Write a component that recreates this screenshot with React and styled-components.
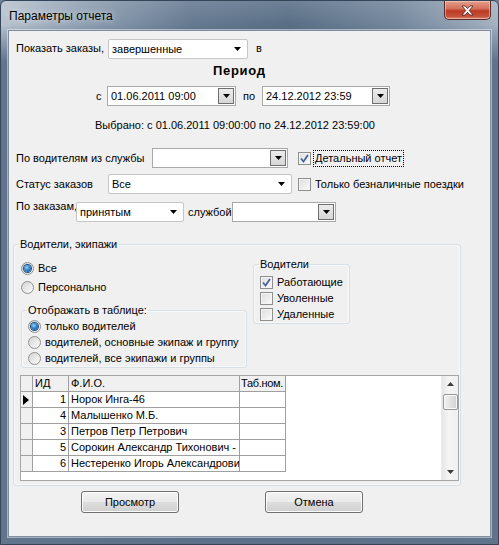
import React from 'react';
import styled, { createGlobalStyle } from 'styled-components';

const GlobalStyle = createGlobalStyle`
  html, body {
    margin: 0;
    padding: 0;
    background: #6b7f95;
  }
  body {
    font-family: 'Liberation Sans', Arial, sans-serif;
    font-size: 11px;
    color: #000;
  }
  * {
    box-sizing: border-box;
  }
`;

const Window = styled.div`
  width: 499px;
  height: 545px;
  display: flex;
  flex-direction: column;
  padding: 0 7px 7px 7px;
  border: 1px solid #34455a;
  border-radius: 6px 6px 0 0;
  background:
    linear-gradient(180deg, rgba(92, 113, 137, 0) 0px, rgba(92, 113, 137, 0) 24px, rgba(92, 113, 137, 0.95) 60px),
    linear-gradient(180deg, rgba(255, 255, 255, 0.15) 0px, rgba(255, 255, 255, 0) 30px),
    linear-gradient(90deg, #b6c1cd 0%, #8c9db0 16%, #60758d 38%, #546a82 58%, #6f8399 80%, #a2b0bf 100%);
`;

const TitleBar = styled.div`
  height: 29px;
  display: flex;
  justify-content: space-between;
  align-items: flex-start;
`;

const Title = styled.span`
  font-family: 'Liberation Sans', Arial, sans-serif;
  font-size: 12px;
  line-height: 12px;
  margin: 9px 0 0 1px;
  color: #000;
  text-shadow: 0 0 6px rgba(255, 255, 255, 0.9);
`;

const CloseButton = styled.div`
  width: 47px;
  height: 19px;
  display: flex;
  align-items: center;
  justify-content: center;
  border: 1px solid #5a2c2a;
  border-top: none;
  border-radius: 0 0 5px 5px;
  background: linear-gradient(180deg, #e3a08e 0%, #d4705b 42%, #bd3a24 55%, #c4503a 85%, #dc8c74 100%);
  box-shadow: inset 0 0 0 1px rgba(255, 220, 210, 0.5);
`;

const Client = styled.div`
  flex: 1;
  background: #f0f0f0;
  border: 1px solid #7f8ea1;
  box-shadow: 0 0 0 1px rgba(255, 255, 255, 0.45);
  padding: 7px 0 0 7px;
  display: flex;
  flex-direction: column;
`;

const Row = styled.div`
  display: flex;
  align-items: ${(p) => p.$align || 'center'};
  height: ${(p) => p.$h || 20}px;
  margin-top: ${(p) => p.$mt || 0}px;
  padding-left: ${(p) => p.$pl || 0}px;
`;

const Label = styled.span`
  display: inline-block;
  width: ${(p) => (p.$w ? `${p.$w}px` : 'auto')};
  margin-left: ${(p) => p.$ml || 0}px;
  margin-top: ${(p) => p.$mt || 0}px;
  line-height: 13px;
  white-space: nowrap;
`;

const PeriodTitle = styled.span`
  font-weight: bold;
  font-size: 13px;
  letter-spacing: 0.7px;
  line-height: 16px;
`;

const ComboBox = styled.div`
  width: ${(p) => p.$w}px;
  height: 20px;
  margin-left: ${(p) => p.$ml || 0}px;
  margin-top: ${(p) => p.$mt || 0}px;
  display: flex;
  align-items: center;
  background: #fff;
  border: 1px solid ${(p) => (p.$boxed ? '#a9a9a9' : '#c6c6c6')};
  border-radius: ${(p) => (p.$boxed ? 0 : 2)}px;
  padding: 0 1px 0 3px;
`;

const ComboText = styled.span`
  flex: 1;
  white-space: nowrap;
  overflow: hidden;
`;

const DropButton = styled.div`
  width: ${(p) => (p.$boxed ? 16 : 14)}px;
  height: 16px;
  display: flex;
  align-items: center;
  justify-content: center;
  border: ${(p) => (p.$boxed ? '1px solid #6e6e6e' : 'none')};
  background: ${(p) => (p.$boxed ? 'linear-gradient(180deg, #ececec, #d6d6d6)' : 'transparent')};
  margin-right: ${(p) => (p.$boxed ? 0 : 2)}px;
`;

const Arrow = () => (
  <svg width="7" height="4" viewBox="0 0 7 4">
    <polygon points="0,0 7,0 3.5,4" fill="#000" />
  </svg>
);

const Combo = ({ w, boxed, value, ml, mt }) => (
  <ComboBox $w={w} $boxed={boxed} $ml={ml} $mt={mt}>
    <ComboText>{value}</ComboText>
    <DropButton $boxed={boxed}>
      <Arrow />
    </DropButton>
  </ComboBox>
);

const CheckWrap = styled.div`
  display: flex;
  align-items: center;
  margin-left: ${(p) => p.$ml || 0}px;
  height: ${(p) => p.$h || 16}px;
`;

const CheckBox = styled.div`
  width: 13px;
  height: 13px;
  border: 1px solid #8e8f8f;
  background: linear-gradient(135deg, #dcdcdc, #fbfbfb);
  box-shadow: inset 0 0 0 1px #f4f4f4;
  display: flex;
  align-items: center;
  justify-content: center;
  flex-shrink: 0;
`;

const CheckText = styled.span`
  margin-left: 3px;
  padding: 1px 1px;
  line-height: 13px;
  white-space: nowrap;
  outline: ${(p) => (p.$focused ? '1px dotted #000' : 'none')};
`;

const Check = ({ checked, label, focused, ml, h }) => (
  <CheckWrap $ml={ml} $h={h}>
    <CheckBox>
      {checked && (
        <svg width="9" height="9" viewBox="0 0 9 9">
          <path d="M1 4.5 L3.5 7.5 L8 1" stroke="#4c61a0" strokeWidth="1.8" fill="none" />
        </svg>
      )}
    </CheckBox>
    <CheckText $focused={focused}>{label}</CheckText>
  </CheckWrap>
);

const RadioCircle = styled.div`
  width: 13px;
  height: 13px;
  border-radius: 50%;
  border: 1px solid #8f8f8f;
  background: linear-gradient(135deg, #d4d4d4, #fcfcfc);
  display: flex;
  align-items: center;
  justify-content: center;
  flex-shrink: 0;
`;

const RadioDot = styled.div`
  width: 7px;
  height: 7px;
  border-radius: 50%;
  background: radial-gradient(circle at 40% 35%, #9fd2f7 0%, #3a8ad0 40%, #124a84 100%);
  box-shadow: 0 0 0 1px #1b4d7e;
`;

const RadioText = styled.span`
  margin-left: 4px;
  line-height: 13px;
  white-space: nowrap;
`;

const Radio = ({ checked, label, h, mt }) => (
  <Row $h={h || 16} $mt={mt}>
    <RadioCircle>{checked && <RadioDot />}</RadioCircle>
    <RadioText>{label}</RadioText>
  </Row>
);

const Group = styled.fieldset`
  margin: ${(p) => p.$mt || 0}px 0 0 ${(p) => p.$ml || 0}px;
  padding: 0 1px 0 ${(p) => p.$pl || 7}px;
  width: ${(p) => p.$w}px;
  height: ${(p) => p.$h}px;
  border: 1px solid #d5dfe5;
  border-radius: 3px;
  box-shadow: inset 0 0 0 1px rgba(255, 255, 255, 0.6);
  min-width: 0;
`;

const Legend = styled.legend`
  padding: 0 1px;
  margin-left: ${(p) => p.$ml || 0}px;
  line-height: 13px;
  font-size: 11px;
`;

const Columns = styled.div`
  display: flex;
  align-items: flex-start;
`;

const Column = styled.div`
  width: ${(p) => p.$w}px;
  display: flex;
  flex-direction: column;
`;

const GridBox = styled.div`
  margin: 7px 0 0 -1px;
  width: 439px;
  height: 106px;
  border: 1px solid #a5a5a5;
  background: #fff;
  display: flex;
`;

const GridBody = styled.div`
  flex: 1;
  display: grid;
  grid-template-columns: 12px 36px 171px 46px;
  grid-auto-rows: 16px;
  align-content: start;
`;

const Cell = styled.div`
  border-right: 1px solid #a0a0a0;
  border-bottom: 1px solid #a0a0a0;
  background: ${(p) => (p.$head ? '#f0f0f0' : '#fff')};
  padding: 0 ${(p) => (p.$right ? 2 : 0)}px 0 ${(p) => (p.$tight ? 1 : 2)}px;
  letter-spacing: ${(p) => (p.$tight ? '-0.3px' : 'normal')};
  line-height: 15px;
  white-space: nowrap;
  overflow: hidden;
  display: flex;
  align-items: center;
  justify-content: ${(p) => (p.$right ? 'flex-end' : 'flex-start')};
`;

const ScrollBar = styled.div`
  width: 17px;
  display: flex;
  flex-direction: column;
  align-items: center;
  background: linear-gradient(90deg, #e6e6e6, #f4f4f4 40%, #f0f0f0);
  border-left: 1px solid #ececec;
`;

const ScrollArrow = styled.div`
  height: 16px;
  width: 100%;
  display: flex;
  align-items: center;
  justify-content: center;
`;

const Thumb = styled.div`
  width: 15px;
  height: 16px;
  margin-top: 2px;
  border: 1px solid #979797;
  border-radius: 2px;
  background: linear-gradient(90deg, #f2f2f2, #e2e2e2 50%, #d2d2d2);
  box-shadow: inset 0 0 0 1px #fafafa;
`;

const Spacer = styled.div`
  flex: 1;
`;

const Pointer = () => (
  <svg width="6" height="10" viewBox="0 0 6 10">
    <polygon points="0,0 6,5 0,10" fill="#000" />
  </svg>
);

const ButtonRow = styled.div`
  display: flex;
  gap: 86px;
  margin: 5px 0 0 65px;
`;

const Button = styled.div`
  width: 98px;
  height: 22px;
  display: flex;
  align-items: center;
  justify-content: center;
  border: 1px solid #707070;
  border-radius: 3px;
  background: linear-gradient(180deg, #f2f2f2 0%, #ebebeb 48%, #dddddd 52%, #cfcfcf 100%);
  box-shadow: inset 0 0 0 1px #fcfcfc;
`;

const drivers = [
  { id: 4, name: 'Малышенко М.Б.' },
  { id: 3, name: 'Петров Петр Петрович' },
  { id: 5, name: 'Сорокин Александр  Тихонович - ' },
  { id: 6, name: 'Нестеренко Игорь Александрович' },
];

export default function App() {
  return (
    <>
      <GlobalStyle />
      <Window>
        <TitleBar>
          <Title>Параметры отчета</Title>
          <CloseButton>
            <svg width="13" height="11" viewBox="0 0 13 11">
              <path
                d="M1 1 L4 1 L6.5 3.7 L9 1 L12 1 L8.2 5.5 L12 10 L9 10 L6.5 7.3 L4 10 L1 10 L4.8 5.5 Z"
                fill="#fff"
                stroke="#4a2020"
                strokeWidth="0.8"
              />
            </svg>
          </CloseButton>
        </TitleBar>
        <Client>
          <Row $h={21}>
            <Label $w={92}>Показать заказы,</Label>
            <Combo w={140} value="завершенные" />
            <Label $ml={8}>в</Label>
          </Row>
          <Row $h={16} $mt={4} $pl={197}>
            <PeriodTitle>Период</PeriodTitle>
          </Row>
          <Row $h={20} $mt={7} $pl={80}>
            <Label $w={11}>с</Label>
            <Combo w={129} boxed value="01.06.2011 09:00" />
            <Label $ml={7} $w={19}>по</Label>
            <Combo w={128} boxed value="24.12.2012 23:59" />
          </Row>
          <Row $h={12} $mt={13} $pl={79}>
            <Label>Выбрано: с 01.06.2011 09:00:00 по 24.12.2012 23:59:00</Label>
          </Row>
          <Row $h={20} $mt={17}>
            <Label $w={136}>По водителям из службы</Label>
            <Combo w={136} boxed value="" />
            <Check ml={10} checked focused label="Детальный отчет" />
          </Row>
          <Row $h={20} $mt={6}>
            <Label $w={92}>Статус заказов</Label>
            <Combo w={184} value="Все" />
            <Check ml={6} label="Только безналичные поездки" />
          </Row>
          <Row $h={22} $mt={6} $align="flex-start">
            <Label $w={60}>По заказам,</Label>
            <Combo w={108} mt={2} value="принятым" />
            <Label $ml={4} $w={44} $mt={6}>службой</Label>
            <Combo w={104} mt={2} boxed value="" />
          </Row>

          <Group $mt={16} $ml={-3} $w={448} $h={248}>
            <Legend $ml={-2}>Водители, экипажи</Legend>
            <Columns>
              <Column $w={226}>
                <Radio checked label="Все" h={13} mt={11} />
                <Radio label="Персонально" h={13} mt={6} />
                <Group $mt={10} $w={226} $h={64} $pl={6}>
                  <Legend $ml={-1}>Отображать в таблице:</Legend>
                  <Radio checked label="только водителей" mt={1} />
                  <Radio label="водителей, основные экипаж и группу" />
                  <Radio label="водителей, все экипажи и группы" />
                </Group>
              </Column>
              <Group $mt={7} $ml={6} $w={97} $h={66} $pl={6}>
                <Legend $ml={-1}>Водители</Legend>
                <Row $h={3} />
                <Check checked label="Работающие" />
                <Check label="Уволенные" />
                <Check label="Удаленные" />
              </Group>
            </Columns>
            <GridBox>
              <GridBody>
                <Cell $head />
                <Cell $head>ИД</Cell>
                <Cell $head>Ф.И.О.</Cell>
                <Cell $head $tight>Таб.ном.</Cell>
                <Cell $head>
                  <Pointer />
                </Cell>
                <Cell $right>1</Cell>
                <Cell>Норок Инга-46</Cell>
                <Cell />
                {drivers.map((d) => (
                  <React.Fragment key={d.id}>
                    <Cell $head />
                    <Cell $right>{d.id}</Cell>
                    <Cell>{d.name}</Cell>
                    <Cell />
                  </React.Fragment>
                ))}
              </GridBody>
              <ScrollBar>
                <ScrollArrow>
                  <svg width="7" height="4" viewBox="0 0 7 4">
                    <polygon points="3.5,0 7,4 0,4" fill="#3c3c3c" />
                  </svg>
                </ScrollArrow>
                <Thumb />
                <Spacer />
                <ScrollArrow>
                  <svg width="7" height="4" viewBox="0 0 7 4">
                    <polygon points="0,0 7,0 3.5,4" fill="#3c3c3c" />
                  </svg>
                </ScrollArrow>
              </ScrollBar>
            </GridBox>
          </Group>

          <ButtonRow>
            <Button>Просмотр</Button>
            <Button>Отмена</Button>
          </ButtonRow>
        </Client>
      </Window>
    </>
  );
}
